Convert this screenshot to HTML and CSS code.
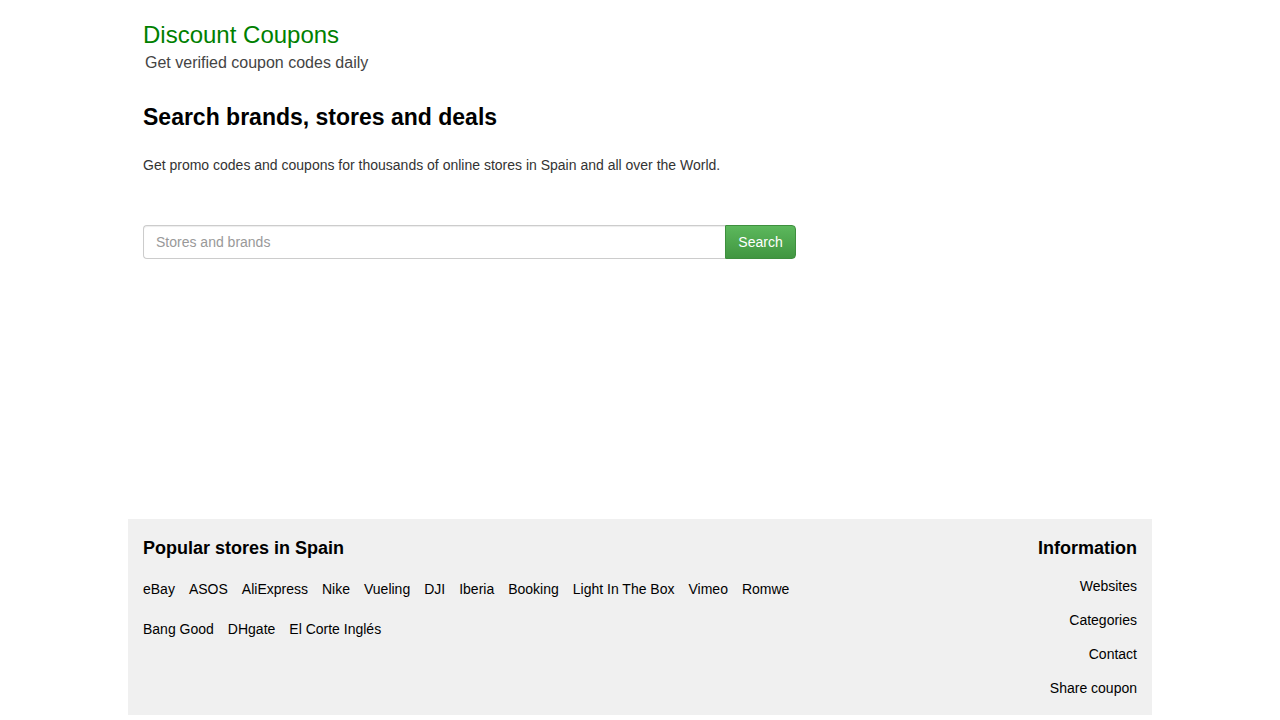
FILE: index.html
```html
<!DOCTYPE html>
<html lang="en">
<head>
  <meta charset="UTF-8" />
  <title>Discount Coupons</title>
  <link rel="stylesheet" href="styles.css">
</head>
<body>
<div class="container">
  <header class="header">
    <a class="brand" href="#">Discount Coupons</a>
    <div class="tagline">Get verified coupon codes daily</div>
  </header>

  <main class="main">
    <h2>Search brands, stores and deals</h2>
    <p class="intro">Get promo codes and coupons for thousands of online stores in Spain and all over the World.</p>

    <form class="search">
      <input type="text" placeholder="Stores and brands">
      <button type="button">Search</button>
    </form>
  </main>

  <footer class="footer">
    <div class="popular">
      <h3>Popular stores in Spain</h3>
      <div class="stores">
        <a href="#">eBay</a>
        <a href="#">ASOS</a>
        <a href="#">AliExpress</a>
        <a href="#">Nike</a>
        <a href="#">Vueling</a>
        <a href="#">DJI</a>
        <a href="#">Iberia</a>
        <a href="#">Booking</a>
        <a href="#">Light In The Box</a>
        <a href="#">Vimeo</a>
        <a href="#">Romwe</a>
        <a href="#">Bang Good</a>
        <a href="#">DHgate</a>
        <a href="#">El Corte Inglés</a>
      </div>
    </div>
    <div class="info">
      <h3>Information</h3>
      <a href="#">Websites</a>
      <a href="#">Categories</a>
      <a href="#">Contact</a>
      <a href="#">Share coupon</a>
    </div>
  </footer>
</div>
</body>
</html>
```

FILE: styles.css
```css
body {
  margin: 0;
  font-family: "Liberation Sans", Arial, sans-serif;
  font-size: 14px;
  color: #333;
  background: #fff;
}
a {
  color: #000;
  text-decoration: none;
}
.container {
  width: 1024px;
  margin: 0 auto;
}
.header {
  padding: 22px 15px 0;
}
.brand {
  display: block;
  color: #008000;
  font-size: 24px;
  line-height: 26px;
}
.tagline {
  margin-top: 5px;
  margin-left: 2px;
  font-size: 16px;
  line-height: 20px;
  color: #444;
}
.main {
  padding: 31px 15px 0;
  height: 415px;
}
.main h2 {
  margin: 0;
  font-size: 23px;
  line-height: 26px;
  color: #000;
}
.intro {
  margin: 25px 0 0;
  line-height: 20px;
}
.search {
  display: flex;
  width: 653px;
  margin-top: 50px;
}
.search input {
  flex: 1;
  height: 34px;
  box-sizing: border-box;
  padding: 6px 12px;
  border: 1px solid #ccc;
  border-right: 0;
  border-radius: 4px 0 0 4px;
  font-family: inherit;
  font-size: 14px;
  color: #555;
  box-shadow: inset 0 1px 1px rgba(0,0,0,0.075);
}
.search input::placeholder {
  color: #999;
}
.search button {
  width: 71px;
  height: 34px;
  border: 1px solid #3e8f3e;
  border-radius: 0 4px 4px 0;
  background: linear-gradient(#5cb85c, #419641);
  color: #fff;
  font-family: inherit;
  font-size: 14px;
  cursor: pointer;
}
.footer {
  display: flex;
  justify-content: space-between;
  background: #f0f0f0;
  padding: 19px 15px 17px;
}
.footer h3 {
  margin: 0;
  font-size: 18px;
  line-height: 20px;
  color: #000;
}
.stores {
  display: flex;
  flex-wrap: wrap;
  width: 660px;
  column-gap: 14px;
  row-gap: 20px;
  margin-top: 21px;
  line-height: 20px;
}
.info {
  display: flex;
  flex-direction: column;
  align-items: flex-end;
  gap: 14px;
  line-height: 20px;
}
.info h3 {
  margin-bottom: 4px;
}
```
